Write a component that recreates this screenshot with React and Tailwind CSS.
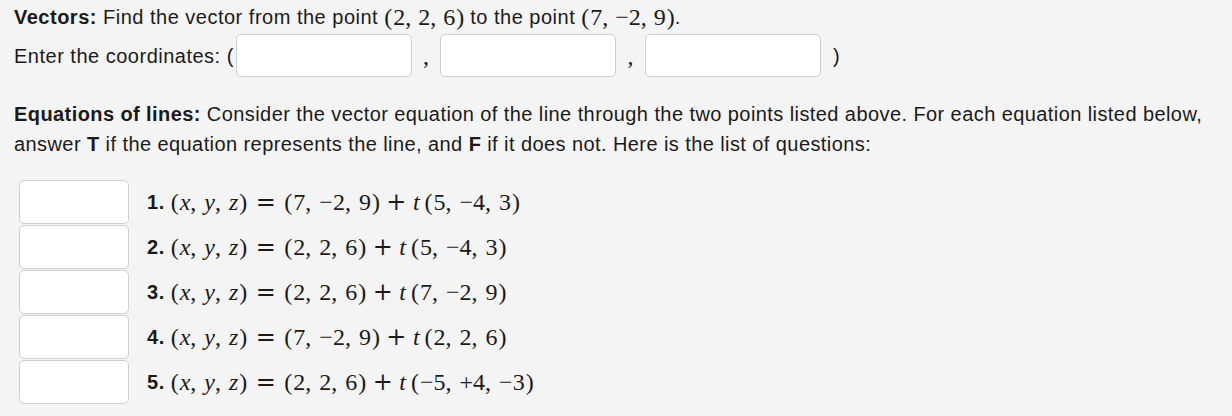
import React from 'react'

const sans = { fontFamily: '"Liberation Sans", Arial, sans-serif' }
const opFont = { fontFamily: '"DejaVu Serif", "Liberation Serif", serif' }

const M = ({ children }) => (
  <span className="text-[24px] tracking-normal" style={{ fontFamily: '"Liberation Serif", "DejaVu Serif", serif' }}>{children}</span>
)
const I = ({ children }) => <i>{children}</i>

const Tuple = ({ items, gap = 'mr-[7px]' }) => (
  <span>
    <span className="mr-[1px]">(</span>
    {items.map((it, i) => (
      <React.Fragment key={i}>
        {i > 0 && <span className={gap}>,</span>}
        {it}
      </React.Fragment>
    ))}
    <span className="ml-[1px]">)</span>
  </span>
)

const xyz = [<I>x</I>, <I>y</I>, <I>z</I>]

const eqs = [
  [['7', '−2', '9'], ['5', '−4', '3']],
  [['2', '2', '6'], ['5', '−4', '3']],
  [['2', '2', '6'], ['7', '−2', '9']],
  [['7', '−2', '9'], ['2', '2', '6']],
  [['2', '2', '6'], ['−5', '+4', '−3']],
]

const Field = ({ className }) => (
  <div className={`bg-white border border-[#cfcfcf] rounded-[5px] ${className}`} />
)

export default function App() {
  return (
    <div className="w-[1232px] h-[416px] bg-[#f4f4f4] text-[20px] tracking-[0.5px] text-[#1a1a1a] px-[14px] pt-[4px] overflow-hidden" style={sans}>
      <div className="h-[26px] flex items-center whitespace-nowrap">
        <b>Vectors:</b>&nbsp;Find the vector from the point&nbsp;
        <M><Tuple items={['2', '2', '6']} /></M>
        &nbsp;to the point&nbsp;
        <M><Tuple items={['7', '−2', '9']} /></M>.
      </div>

      <div className="flex items-center mt-[4px] h-[43px] whitespace-nowrap">
        <span>Enter the coordinates: (</span>
        <Field className="w-[176px] h-[43px] ml-[2px]" />
        <span className="w-[28px] text-center"><M>,</M></span>
        <Field className="w-[176px] h-[43px]" />
        <span className="w-[29px] text-center"><M>,</M></span>
        <Field className="w-[176px] h-[43px]" />
        <span className="ml-[12px]">)</span>
      </div>

      <p className="mt-[22px] leading-[30px] whitespace-nowrap tracking-[0.42px]">
        <b>Equations of lines:</b> Consider the vector equation of the line through the two points listed above. For each equation listed below,
        <br />
        answer <b>T</b> if the equation represents the line, and <b>F</b> if it does not. Here is the list of questions:
      </p>

      <div className="mt-[21px] ml-[5px] flex flex-col gap-[1px]">
        {eqs.map(([p, d], i) => (
          <div key={i} className="flex items-center">
            <Field className="w-[110px] h-[44px]" />
            <div className="ml-[18px] flex items-center whitespace-nowrap">
              <b className="mr-[6px]">{i + 1}.</b>
              <M>
                <Tuple items={xyz} gap="mr-[8px]" />
                <span className="inline-block w-[37px] text-center" style={opFont}>=</span>
                <Tuple items={p} gap="mr-[8px]" />
                <span className="inline-block w-[33px] text-center" style={opFont}>+</span>
                <I>t</I>
                <span className="ml-[5px]"><Tuple items={d} gap="mr-[8px]" /></span>
              </M>
            </div>
          </div>
        ))}
      </div>
    </div>
  )
}
